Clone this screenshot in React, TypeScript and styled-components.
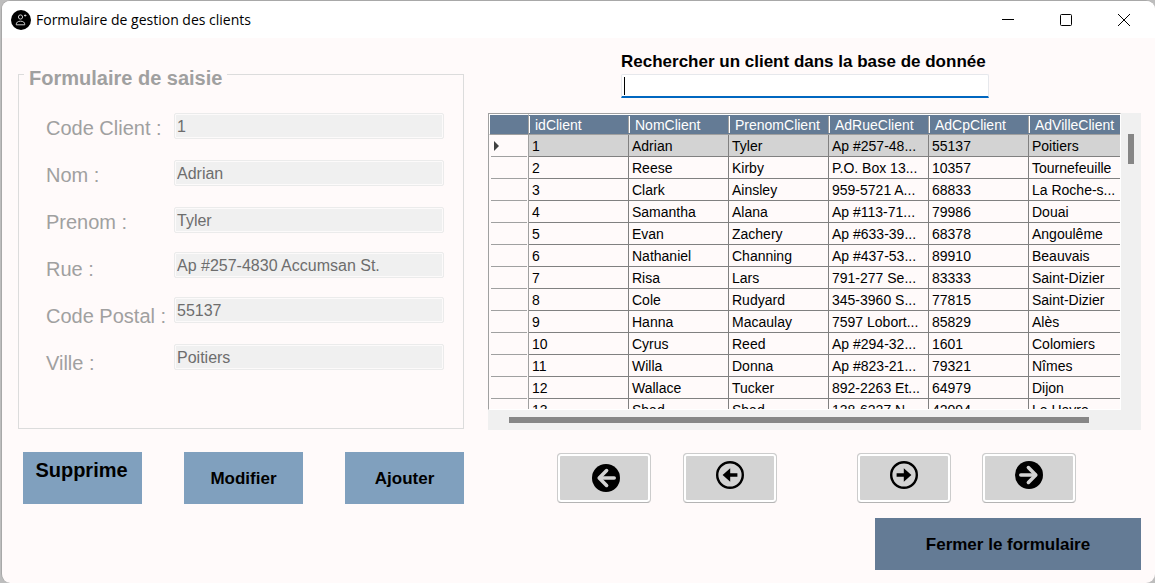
import React from "react";
import styled, { createGlobalStyle } from "styled-components";

const GlobalStyle = createGlobalStyle`
  * { box-sizing: border-box; }
  body {
    margin: 0;
    background: #bdbdbd;
    font-family: "Liberation Sans", Arial, sans-serif;
    color: #000;
  }
  button, input { font-family: inherit; }
`;

const Window = styled.main`
  min-height: 100vh;
  display: flex;
  flex-direction: column;
  margin-left: 1px;
  border: 1px solid #a8a8a8;
  border-right: 0;
  border-bottom: 0;
  border-radius: 9px;
  overflow: hidden;
  background: #fffafa;
`;

const TitleBar = styled.header`
  display: flex;
  align-items: center;
  height: 37px;
  padding: 0 2px 0 9px;
  background: #fff;
`;

const Title = styled.h1`
  flex: 1;
  margin: 0 0 0 5px;
  font: 400 14px/20px "Open Sans", "Noto Sans", sans-serif;
`;

const WindowButton = styled.button`
  display: grid;
  place-items: center;
  width: 58px;
  height: 36px;
  padding: 0;
  border: 0;
  background: transparent;
`;

const Content = styled.div`
  display: grid;
  grid-template-columns: minmax(0, 446fr) minmax(0, 653fr);
  column-gap: 24px;
  padding: 14px 14px 13px 16px;
`;

const EntryPane = styled.section`
  display: flex;
  flex-direction: column;
  padding-top: 8px;
`;

const EntryForm = styled.fieldset`
  display: flex;
  height: 369px;
  min-width: 0;
  margin: 0;
  padding: 25px 19px 0 27px;
  border: 1px solid #dcdcdc;
`;

const Legend = styled.legend`
  margin-left: -22px;
  padding: 8px 5px 0;
  font-size: 20px;
  font-weight: 700;
  line-height: 20px;
  color: #a0a0a0;
`;

const Labels = styled.div`
  display: flex;
  flex-direction: column;
  gap: 17px;
  width: 128px;
`;

const FieldLabel = styled.label`
  font-size: 20px;
  line-height: 30px;
  white-space: nowrap;
  color: #a0a0a0;
`;

const Inputs = styled.div`
  flex: 1;
  min-width: 0;
`;

const FieldInput = styled.input<{ $tight?: boolean }>`
  display: block;
  width: 100%;
  height: 26px;
  margin-bottom: ${(p) => (p.$tight ? 19 : 21)}px;
  padding: 1px 2px 0;
  border: 1px solid #ebebeb;
  border-radius: 2px;
  box-shadow: inset 0 0 0 1px #fcfafa;
  background: #f0f0f0;
  font-size: 16px;
  color: #6d6d6d;
`;

const Actions = styled.div`
  display: flex;
  justify-content: space-between;
  margin-top: 23px;
  padding-left: 5px;
`;

const ActionButton = styled.button<{ $large?: boolean }>`
  width: 119px;
  height: 52px;
  padding: ${(p) => (p.$large ? "0 2px 16px 0" : "2px 0 0")};
  border: 0;
  background: #80a0be;
  font-size: ${(p) => (p.$large ? 20 : 17)}px;
  font-weight: 700;
  color: #000;
`;

const DataPane = styled.section`
  display: flex;
  flex-direction: column;
`;

const Search = styled.div`
  padding-left: 133px;
`;

const SearchLabel = styled.label`
  display: block;
  font-size: 17px;
  font-weight: 700;
  line-height: 20px;
  white-space: nowrap;
`;

const SearchBox = styled.div`
  position: relative;
  width: 368px;
  margin-top: 2px;
`;

const SearchInput = styled.input`
  display: block;
  width: 100%;
  height: 24px;
  padding: 0 4px;
  border: 1px solid #e6e8ec;
  border-bottom: 2px solid #0067c0;
  border-radius: 2px 2px 0 0;
  background: #fff;
  font-size: 16px;
  outline: 0;
`;

const Caret = styled.span`
  position: absolute;
  left: 3px;
  top: 3px;
  width: 1px;
  height: 18px;
  background: #000;
`;

const Grid = styled.div`
  display: grid;
  grid-template-columns: minmax(0, 1fr) 20px;
  grid-template-rows: 297px 20px;
  margin-top: 15px;
  background: #f0f0f0;
`;

const GridViewport = styled.div`
  overflow: hidden;
  border-right: 1px solid #fff;
  border-bottom: 1px solid #fff;
  border-left: 1px solid #a0a0a0;
  border-top: 1px solid #a0a0a0;
  background: #fffafa;
`;

const Table = styled.table`
  width: 100%;
  min-width: 640px;
  table-layout: fixed;
  border-collapse: separate;
  border-spacing: 0;
  font-size: 14px;
  line-height: 20px;
`;

const HeadCell = styled.th`
  width: 100px;
  height: 21px;
  padding: 1px 0 0 6px;
  border-top: 1px solid #fff;
  border-bottom: 1px solid #a0a0a0;
  background: linear-gradient(#fff, #fff) 0 1px / 1px 17px no-repeat,
    linear-gradient(#a0a0a0, #a0a0a0) 100% 1px / 1px 17px no-repeat, #647b95;
  line-height: 18px;
  font-weight: 400;
  text-align: left;
  color: #fff;
`;

const CornerCell = styled(HeadCell)`
  width: 40px;
  padding: 0;
  border-left: 1px solid #fff;
  border-right: 1px solid #a0a0a0;
  background: #647b95;
`;

const RowHead = styled.th`
  height: 22px;
  padding: 0 0 0 5px;
  border-right: 1px solid #a0a0a0;
  background: linear-gradient(#a0a0a0, #a0a0a0) 2px 100% / 36px 1px no-repeat;
  text-align: left;
`;

const Marker = styled.svg`
  display: block;
`;

const Cell = styled.td`
  height: 22px;
  padding: 1px 0 0 3px;
  border-right: 1px solid #808080;
  border-bottom: 1px solid #808080;
  overflow: hidden;
  white-space: nowrap;
`;

const Row = styled.tr<{ $selected: boolean }>`
  ${Cell} {
    background: ${(p) => (p.$selected ? "#d3d3d3" : "transparent")};
  }
`;

const VerticalTrack = styled.div`
  padding: 21px 7px 0;
`;

const HorizontalTrack = styled.div`
  grid-column: 1 / -1;
  padding: 7px 52px 0 21px;
`;

const Thumb = styled.div<{ $length?: number }>`
  height: ${(p) => p.$length ?? 6}px;
  background: #868686;
`;

const Navigation = styled.nav`
  display: flex;
  gap: 80px;
  margin-top: 23px;
  padding-left: 69px;
`;

const NavGroup = styled.div`
  display: flex;
  gap: 32px;

  & + & {
    gap: 31px;
  }
`;

const NavButton = styled.button<{ $raised?: boolean }>`
  display: grid;
  place-items: center;
  width: 94px;
  height: 50px;
  padding: ${(p) => (p.$raised ? "0 0 6px" : "0 0 0 4px")};
  border: 1px solid #cccccc;
  border-bottom-color: #b4b4b4;
  border-radius: 4px;
  box-shadow: inset 0 0 0 2px #fff;
  background: #d3d3d3;
`;

const CloseButton = styled.button`
  align-self: flex-end;
  width: 266px;
  height: 52px;
  margin-top: 15px;
  padding: 2px 0 0;
  border: 0;
  background: #647b95;
  font-size: 17px;
  font-weight: 700;
  color: #000;
`;

const fields = [
  { id: "code", label: "Code Client :", value: "1" },
  { id: "nom", label: "Nom :", value: "Adrian" },
  { id: "prenom", label: "Prenom :", value: "Tyler", tight: true },
  { id: "rue", label: "Rue :", value: "Ap #257-4830 Accumsan St.", tight: true },
  { id: "cp", label: "Code Postal :", value: "55137" },
  { id: "ville", label: "Ville :", value: "Poitiers" },
];

const columns = ["idClient", "NomClient", "PrenomClient", "AdRueClient", "AdCpClient", "AdVilleClient"];

const clients = [
  ["1", "Adrian", "Tyler", "Ap #257-48...", "55137", "Poitiers"],
  ["2", "Reese", "Kirby", "P.O. Box 13...", "10357", "Tournefeuille"],
  ["3", "Clark", "Ainsley", "959-5721 A...", "68833", "La Roche-s..."],
  ["4", "Samantha", "Alana", "Ap #113-71...", "79986", "Douai"],
  ["5", "Evan", "Zachery", "Ap #633-39...", "68378", "Angoulême"],
  ["6", "Nathaniel", "Channing", "Ap #437-53...", "89910", "Beauvais"],
  ["7", "Risa", "Lars", "791-277 Se...", "83333", "Saint-Dizier"],
  ["8", "Cole", "Rudyard", "345-3960 S...", "77815", "Saint-Dizier"],
  ["9", "Hanna", "Macaulay", "7597 Lobort...", "85829", "Alès"],
  ["10", "Cyrus", "Reed", "Ap #294-32...", "1601", "Colomiers"],
  ["11", "Willa", "Donna", "Ap #823-21...", "79321", "Nîmes"],
  ["12", "Wallace", "Tucker", "892-2263 Et...", "64979", "Dijon"],
  ["13", "Shad", "Shad", "138-6227 N...", "42094", "Le Havre"],
];

function SolidArrow({ right }: { right?: boolean }) {
  return (
    <svg width="28" height="28" viewBox="0 0 28 28" fill="none">
      <circle cx="14" cy="14" r="14" fill="#000" />
      <g transform={right ? "matrix(-1 0 0 1 28 0)" : undefined} stroke="#d3d3d3" strokeLinecap="round" strokeLinejoin="round">
        <path d="M14.6 6.6L7.2 14l7.4 7.4" strokeWidth="3.6" />
        <path d="M8 14H22.2" strokeWidth="3.6" />
      </g>
    </svg>
  );
}

function OutlineArrow({ right }: { right?: boolean }) {
  return (
    <svg width="28" height="28" viewBox="0 0 28 28" fill="none">
      <circle cx="14" cy="14" r="12.8" stroke="#000" strokeWidth="2.4" />
      <path
        transform={right ? "matrix(-1 0 0 1 28 0)" : undefined}
        d="M6.6 14l7.6-6.8v5h7.2v3.6h-7.2v5z"
        fill="#000"
      />
    </svg>
  );
}

function AppIcon() {
  return (
    <svg width="20" height="20" viewBox="0 0 20 20" fill="none">
      <circle cx="10" cy="10" r="10" fill="#000" />
      <circle cx="9.5" cy="7" r="2.1" stroke="#ccc" />
      <path d="M5.2 14.8c0-2.6 1.7-3.6 4.3-3.6s4.3 1 4.3 3.6z" stroke="#ccc" />
      <path d="M13 5.5h2.4M14.2 4.5v2" stroke="#ccc" />
    </svg>
  );
}

export default function App() {
  return (
    <>
      <GlobalStyle />
      <Window>
        <TitleBar>
          <AppIcon />
          <Title>Formulaire de gestion des clients</Title>
          <WindowButton aria-label="Réduire">
            <svg width="12" height="12" viewBox="0 0 12 12" stroke="#000">
              <path d="M0 5.5h12" />
            </svg>
          </WindowButton>
          <WindowButton aria-label="Agrandir">
            <svg width="12" height="12" viewBox="0 0 12 12" fill="none" stroke="#000">
              <rect x="0.5" y="0.5" width="11" height="11" rx="1" />
            </svg>
          </WindowButton>
          <WindowButton aria-label="Fermer">
            <svg width="12" height="12" viewBox="0 0 12 12" stroke="#000">
              <path d="M0 0l12 12M12 0L0 12" />
            </svg>
          </WindowButton>
        </TitleBar>
        <Content>
          <EntryPane>
            <EntryForm disabled>
              <Legend>Formulaire de saisie</Legend>
              <Labels>
                {fields.map((f) => (
                  <FieldLabel key={f.id} htmlFor={f.id}>
                    {f.label}
                  </FieldLabel>
                ))}
              </Labels>
              <Inputs>
                {fields.map((f) => (
                  <FieldInput key={f.id} id={f.id} defaultValue={f.value} $tight={f.tight} />
                ))}
              </Inputs>
            </EntryForm>
            <Actions>
              <ActionButton $large>Supprime</ActionButton>
              <ActionButton>Modifier</ActionButton>
              <ActionButton>Ajouter</ActionButton>
            </Actions>
          </EntryPane>
          <DataPane>
            <Search>
              <SearchLabel htmlFor="recherche">Rechercher un client dans la base de donnée</SearchLabel>
              <SearchBox>
                <SearchInput id="recherche" />
                <Caret />
              </SearchBox>
            </Search>
            <Grid>
              <GridViewport>
                <Table>
                  <thead>
                    <tr>
                      <CornerCell />
                      {columns.map((c) => (
                        <HeadCell key={c} scope="col">
                          {c}
                        </HeadCell>
                      ))}
                    </tr>
                  </thead>
                  <tbody>
                    {clients.map((client, i) => (
                      <Row key={client[0]} $selected={i === 0}>
                        <RowHead scope="row">
                          {i === 0 && (
                            <Marker width="5" height="10" viewBox="0 0 5 10">
                              <path d="M0 0l5 5-5 5z" fill="#404040" />
                            </Marker>
                          )}
                        </RowHead>
                        {client.map((value, j) => (
                          <Cell key={columns[j]}>{value}</Cell>
                        ))}
                      </Row>
                    ))}
                  </tbody>
                </Table>
              </GridViewport>
              <VerticalTrack>
                <Thumb $length={30} />
              </VerticalTrack>
              <HorizontalTrack>
                <Thumb />
              </HorizontalTrack>
            </Grid>
            <Navigation>
              <NavGroup>
                <NavButton aria-label="Premier">
                  <SolidArrow />
                </NavButton>
                <NavButton aria-label="Précédent" $raised>
                  <OutlineArrow />
                </NavButton>
              </NavGroup>
              <NavGroup>
                <NavButton aria-label="Suivant" $raised>
                  <OutlineArrow right />
                </NavButton>
                <NavButton aria-label="Dernier" $raised>
                  <SolidArrow right />
                </NavButton>
              </NavGroup>
            </Navigation>
            <CloseButton>Fermer le formulaire</CloseButton>
          </DataPane>
        </Content>
      </Window>
    </>
  );
}
